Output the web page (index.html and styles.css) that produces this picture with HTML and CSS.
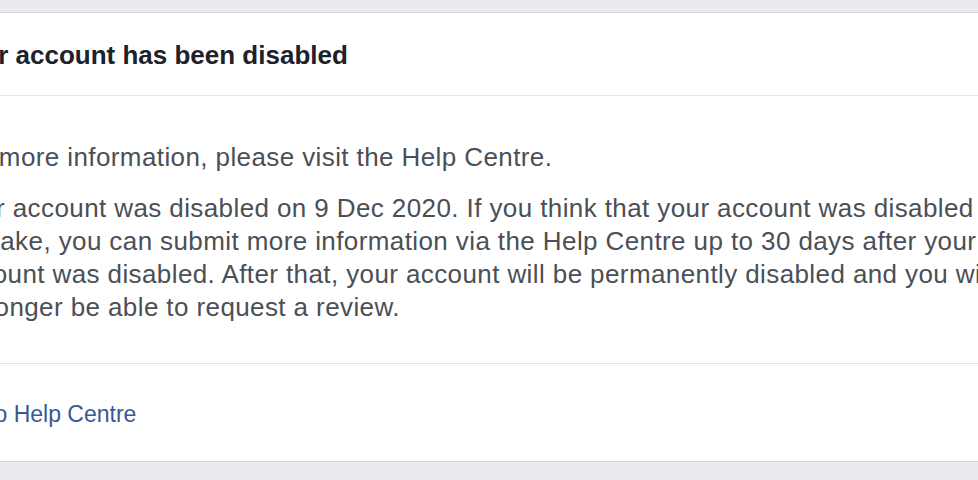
FILE: index.html
```html
<!DOCTYPE html>
<html lang="en">
<head>
    <meta charset="UTF-8">
    <title>Your account has been disabled</title>
    <link rel="stylesheet" href="styles.css">
</head>
<body>
    <div class="page">
        <div class="card">
            <div class="card-header">
                <h2>Your account has been disabled</h2>
            </div>

            <div class="card-body">
                <p>For more information, please visit the Help Centre.</p>
                <p>Your account was disabled on 9 Dec 2020. If you think that your account was disabled by mistake, you can submit more information via the Help Centre up to 30 days after your account was disabled. After that, your account will be permanently disabled and you will no longer be able to request a review.</p>
            </div>

            <div class="card-footer">
                <a href="#">Go to Help Centre</a>
            </div>
        </div>
    </div>
</body>
</html>
```

FILE: styles.css
```css
body {
    margin: 0;
    background: #e9ebee;
    font-family: "Liberation Sans", Arial, sans-serif;
    overflow: hidden;
}

.page {
    padding-top: 12px;
    margin-left: -74px;
}

.card {
    width: 1160px;
    background: #fff;
    border: 1px solid #dddfe2;
    border-top-color: #d3d6db;
    border-bottom-color: #cfd1d5;
}

.card-header {
    padding: 26px 24px 24px;
    border-bottom: 1px solid #e1e3e6;
}

.card-header h2 {
    margin: 0;
    font-size: 26px;
    line-height: 32px;
    font-weight: bold;
    color: #1d2129;
}

.card-body {
    padding: 45px 24px 39px;
    border-bottom: 1px solid #e1e3e6;
}

.card-body p {
    max-width: 1066px;
    margin: 0 0 18px;
    font-size: 26px;
    line-height: 33px;
    letter-spacing: 0.4px;
    color: #4b4f56;
}

.card-body p:last-child {
    margin-bottom: 0;
}

.card-footer {
    padding: 36px 24px 33px;
}

.card-footer a {
    font-size: 23px;
    line-height: 28px;
    color: #385898;
    text-decoration: none;
}
```
